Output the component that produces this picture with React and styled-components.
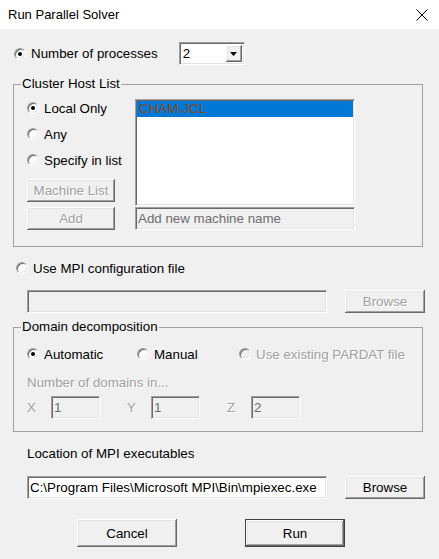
import React from 'react';
import styled, { createGlobalStyle, css } from 'styled-components';

const GlobalStyle = createGlobalStyle`
  html, body { margin: 0; padding: 0; background: #f0f0f0; }
  body {
    font-family: "Liberation Sans", Arial, sans-serif;
    font-size: 13.33px;
    color: #000;
  }
  * { box-sizing: border-box; }
`;

const sunken = css`
  border: 1px solid;
  border-color: #a0a0a0 #fff #fff #a0a0a0;
  box-shadow: inset 1px 1px 0 #696969, inset -1px -1px 0 #e3e3e3;
`;

const raised = css`
  box-shadow: inset -1px -1px 0 #696969, inset 1px 1px 0 #fff,
    inset -2px -2px 0 #a0a0a0, inset 2px 2px 0 #e3e3e3;
`;

const disabledText = css`
  color: #a0a0a0;
  text-shadow: 1px 1px 0 #fff;
`;

const Window = styled.div`
  width: 439px;
  height: 559px;
  display: flex;
  flex-direction: column;
  background: #f0f0f0;
  overflow: hidden;
`;

const TitleBar = styled.div`
  height: 29px;
  flex-shrink: 0;
  background: #fff;
  display: flex;
  align-items: center;
  justify-content: space-between;
  padding: 0 11px 0 8px;
  font-size: 13px;
`;

const Body = styled.div`
  flex: 1;
  display: flex;
  flex-direction: column;
  padding: 13px 16px 0 13px;
`;

const Row = styled.div`
  display: flex;
  align-items: center;
  height: ${p => p.$h || 16}px;
  margin-top: ${p => p.$mt || 0}px;
  padding-left: ${p => p.$pl || 0}px;
  flex-shrink: 0;
`;

const Option = styled.label`
  display: flex;
  align-items: center;
  gap: 5px;
  white-space: nowrap;
  height: ${p => p.$h || 16}px;
  width: ${p => (p.$w ? `${p.$w}px` : 'auto')};
  flex-shrink: 0;
  ${p => p.$disabled && disabledText}
`;

const RadioDot = styled.span`
  position: relative;
  width: 12px;
  height: 12px;
  flex-shrink: 0;
  border-radius: 50%;
  background: ${p => (p.$disabled ? '#f0f0f0' : '#fff')};
  border: 1px solid;
  border-color: #a0a0a0 #fff #fff #a0a0a0;
  box-shadow: inset 1px 1px 0 #696969, inset -1px -1px 0 #e3e3e3;
  &::after {
    content: '';
    display: ${p => (p.$checked ? 'block' : 'none')};
    position: absolute;
    left: 3px;
    top: 3px;
    width: 4px;
    height: 4px;
    border-radius: 50%;
    background: ${p => (p.$disabled ? '#a0a0a0' : '#000')};
  }
`;

const Combo = styled.div`
  ${sunken};
  width: 66px;
  height: 23px;
  margin-left: 21px;
  background: #fff;
  display: flex;
  align-items: center;
  justify-content: space-between;
  padding: 2px 2px 2px 3px;
`;

const DropButton = styled.span`
  ${raised};
  width: 16px;
  height: 17px;
  background: #f0f0f0;
  display: flex;
  align-items: center;
  justify-content: center;
`;

const Group = styled.div`
  position: relative;
  border: 1px solid #a0a0a0;
  margin-top: ${p => p.$mt}px;
  padding: ${p => p.$pad};
  flex-shrink: 0;
`;

const Caption = styled.span`
  position: absolute;
  top: -9px;
  left: 7px;
  padding: 0 1px;
  line-height: 16px;
  background: #f0f0f0;
`;

const HostArea = styled.div`
  display: flex;
  align-items: flex-start;
  gap: 20px;
`;

const Column = styled.div`
  display: flex;
  flex-direction: column;
  width: ${p => p.$w}px;
`;

const Button = styled.button`
  font: inherit;
  width: ${p => p.$w}px;
  height: ${p => p.$h || 23}px;
  margin-top: ${p => p.$mt || 0}px;
  margin-left: ${p => p.$ml || 0}px;
  padding: 0;
  background: #f0f0f0;
  color: #000;
  border: ${p => (p.$default ? '1px solid #404040' : 'none')};
  ${raised};
  flex-shrink: 0;
  ${p => p.disabled && disabledText}
`;

const ListBox = styled.div`
  ${sunken};
  width: 220px;
  height: 107px;
  margin-top: 4px;
  background: #fff;
  padding: 1px;
`;

const ListItem = styled.div`
  height: 16px;
  line-height: 16px;
  padding-left: 2px;
  background: ${p => (p.$selected ? '#0078d7' : 'transparent')};
  color: ${p => (p.$selected ? '#8a4b1c' : '#000')};
`;

const Field = styled.div`
  ${sunken};
  width: ${p => p.$w}px;
  height: 23px;
  margin-top: ${p => p.$mt || 0}px;
  background: ${p => (p.$disabled ? '#f0f0f0' : '#fff')};
  color: ${p => (p.$disabled ? '#6d6d6d' : '#000')};
  padding: 0 0 0 2px;
  display: flex;
  align-items: center;
  white-space: nowrap;
  overflow: hidden;
  flex-shrink: 0;
`;

const Label = styled.span`
  ${p => p.$disabled && disabledText}
`;

const AxisCell = styled.div`
  display: flex;
  align-items: center;
  width: 100px;
`;

const AxisLabel = styled.span`
  width: 24px;
  ${disabledText}
`;

const Radio = ({ checked, disabled, w, h, children }) => (
  <Option $w={w} $h={h} $disabled={disabled}>
    <RadioDot $checked={checked} $disabled={disabled} />
    {children}
  </Option>
);

const App = () => (
  <>
    <GlobalStyle />
    <Window>
      <TitleBar>
        <span>Run Parallel Solver</span>
        <svg width="12" height="12" viewBox="0 0 12 12">
          <path d="M0.5 0.5 L11.5 11.5 M11.5 0.5 L0.5 11.5" stroke="#000" strokeWidth="1" fill="none" />
        </svg>
      </TitleBar>
      <Body>
        <Row $h={23} $pl={1}>
          <Radio checked>Number of processes</Radio>
          <Combo>
            <span>2</span>
            <DropButton>
              <svg width="7" height="4" viewBox="0 0 7 4">
                <path d="M0 0 H7 L3.5 4 Z" fill="#000" />
              </svg>
            </DropButton>
          </Combo>
        </Row>

        <Group $mt={19} $pad="10px 0 16px 13px">
          <Caption>Cluster Host List</Caption>
          <HostArea>
            <Column $w={88}>
              <Radio checked h={26}>Local Only</Radio>
              <Radio h={26}>Any</Radio>
              <Radio h={26}>Specify in list</Radio>
              <Button $w={88} $mt={6} disabled>Machine List</Button>
              <Button $w={88} $mt={5} disabled>Add</Button>
            </Column>
            <Column $w={220}>
              <ListBox>
                <ListItem $selected>CHAM-JCL</ListItem>
              </ListBox>
              <Field $w={220} $mt={1} $disabled>Add new machine name</Field>
            </Column>
          </HostArea>
        </Group>

        <Row $mt={13} $pl={3}>
          <Radio>Use MPI configuration file</Radio>
        </Row>
        <Row $h={23} $mt={14} $pl={14}>
          <Field $w={300} $disabled />
          <Button $w={80} $ml={18} disabled>Browse</Button>
        </Row>

        <Group $mt={14} $pad="18px 0 12px 13px">
          <Caption>Domain decomposition</Caption>
          <Row>
            <Radio checked w={110}>Automatic</Radio>
            <Radio w={102}>Manual</Radio>
            <Radio disabled>Use existing PARDAT file</Radio>
          </Row>
          <Row $mt={12}>
            <Label $disabled>Number of domains in...</Label>
          </Row>
          <Row $h={23} $mt={6}>
            <AxisCell>
              <AxisLabel>X</AxisLabel>
              <Field $w={49} $disabled>1</Field>
            </AxisCell>
            <AxisCell>
              <AxisLabel>Y</AxisLabel>
              <Field $w={49} $disabled>1</Field>
            </AxisCell>
            <AxisCell>
              <AxisLabel>Z</AxisLabel>
              <Field $w={49} $disabled>2</Field>
            </AxisCell>
          </Row>
        </Group>

        <Row $mt={13} $pl={14}>
          <Label>Location of MPI executables</Label>
        </Row>
        <Row $h={23} $mt={15} $pl={14}>
          <Field $w={300}>C:\Program Files\Microsoft MPI\Bin\mpiexec.exe</Field>
          <Button $w={80} $ml={18}>Browse</Button>
        </Row>
        <Row $h={28} $mt={20}>
          <Button $w={100} $h={28} $ml={64}>Cancel</Button>
          <Button $w={100} $h={28} $ml={68} $default>Run</Button>
        </Row>
      </Body>
    </Window>
  </>
);

export default App;
